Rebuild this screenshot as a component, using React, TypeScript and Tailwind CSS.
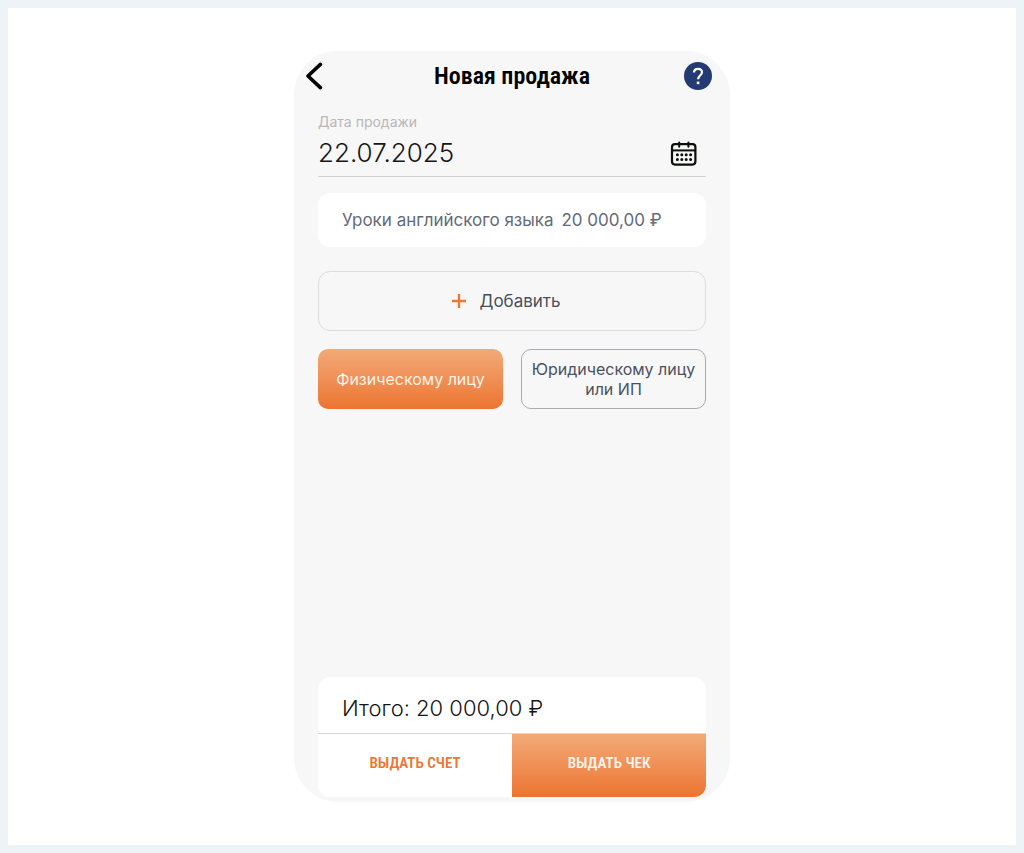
import React, { useState } from 'react';

type Customer = 'person' | 'company';

interface SaleItem {
  name: string;
  price: string;
}

const items: SaleItem[] = [{ name: 'Уроки английского языка', price: '20 000,00 ₽' }];

const BackIcon: React.FC = () => (
  <svg className="h-7 w-5" viewBox="0 0 20 28" fill="none" aria-hidden="true">
    <path d="M16.4 2.4 4 14l12.4 11.6" stroke="#000" strokeWidth="3.6" strokeLinecap="round" strokeLinejoin="round" />
  </svg>
);

const HelpIcon: React.FC = () => (
  <svg className="h-7 w-7" viewBox="0 0 28 28" fill="none" aria-hidden="true">
    <circle cx="14" cy="14" r="14" fill="#233a73" />
    <path
      d="M10 10.4c0-2.2 1.6-3.6 4-3.6s4 1.4 4 3.4c0 3.1-3.9 3.5-3.9 7"
      stroke="#fff"
      strokeWidth="2.2"
    />
    <path d="M12.8 19.6h2.6v2.6h-2.6z" fill="#fff" />
  </svg>
);

const CalendarIcon: React.FC = () => (
  <svg className="h-7 w-7" viewBox="0 0 28 28" fill="none" stroke="#0d0f0c" aria-hidden="true">
    <rect x="2" y="4.2" width="23.4" height="20.4" rx="3" strokeWidth="2.2" />
    <path d="M2 10.4h23.4" strokeWidth="2" />
    <path d="M9.2 2.4v4.4M18.4 2.4v4.4" strokeWidth="2" strokeLinecap="round" />
    <path
      d="M7.4 14.8h.01M11.8 14.8h.01M16.2 14.8h.01M20.6 14.8h.01M7.4 19.4h.01M11.8 19.4h.01M16.2 19.4h.01M20.6 19.4h.01"
      strokeWidth="3"
      strokeLinecap="round"
    />
  </svg>
);

const PlusIcon: React.FC = () => (
  <svg className="h-4 w-4" viewBox="0 0 16 16" fill="none" aria-hidden="true">
    <path d="M8 1v14M1 8h14" stroke="#ee7733" strokeWidth="2.4" />
  </svg>
);

const App: React.FC = () => {
  const [date, setDate] = useState('22.07.2025');
  const [customer, setCustomer] = useState<Customer>('person');

  const customerClass = (value: Customer) =>
    customer === value
      ? 'bg-linear-to-b from-[#f2aa77] to-[#ec742e] text-[#fff3ea]'
      : 'border border-[#a9abb0] text-[#4b5160]';

  return (
    <div className="flex min-h-screen flex-col items-center border-8 border-[#edf3f7] bg-white px-4 py-[43px] font-['Inter',sans-serif]">
      <main className="flex w-full max-w-[436px] flex-1 flex-col rounded-[44px] bg-[#f7f7f7] px-6 pb-[5px]">
        {/* Header */}
        <header className="-mx-4 flex h-[50px] items-center justify-between pr-[10px] pl-[2px]">
          <button type="button" aria-label="Назад" className="w-9">
            <BackIcon />
          </button>
          <h1 className="font-['Roboto_Condensed','Roboto',sans-serif] text-2xl font-semibold text-black">
            Новая продажа
          </h1>
          <button type="button" aria-label="Помощь">
            <HelpIcon />
          </button>
        </header>

        {/* Sale date */}
        <div className="mt-3 flex h-[64px] items-end justify-between border-b border-[#d2d2d2] pr-2">
          <div className="min-w-0 flex-1 pb-1.5">
            <label htmlFor="sale-date" className="block text-sm leading-4 text-[#b8b8b8]">
              Дата продажи
            </label>
            <input
              id="sale-date"
              value={date}
              onChange={(e) => setDate(e.target.value)}
              className="mt-1 block h-9 w-full bg-transparent text-[26px] font-light text-[#151515] outline-none"
            />
          </div>
          <button type="button" aria-label="Календарь" className="pb-2">
            <CalendarIcon />
          </button>
        </div>

        {/* Items */}
        <ul className="mt-4">
          {items.map((item) => (
            <li
              key={item.name}
              className="flex h-[54px] items-center gap-2 rounded-xl bg-white px-6 text-[17px] leading-6 text-[#656a77]"
            >
              <span>{item.name}</span>
              <span>{item.price}</span>
            </li>
          ))}
        </ul>

        <button
          type="button"
          className="mt-6 flex h-[60px] items-center justify-center gap-3 rounded-xl border border-[#dcdcdc] pr-3 text-[17px] leading-6 text-[#484e5b]"
        >
          <PlusIcon />
          Добавить
        </button>

        <div className="mt-[18px] grid grid-cols-2 gap-[18px]">
          <button
            type="button"
            onClick={() => setCustomer('person')}
            className={`h-[60px] rounded-[10px] text-base leading-5 ${customerClass('person')}`}
          >
            Физическому лицу
          </button>
          <button
            type="button"
            onClick={() => setCustomer('company')}
            className={`h-[60px] rounded-[10px] text-base leading-5 ${customerClass('company')}`}
          >
            Юридическому лицу
            <br />
            или ИП
          </button>
        </div>

        {/* Total and actions */}
        <section className="mt-auto overflow-hidden rounded-xl bg-white">
          <p className="flex h-[57px] items-center border-b border-[#d8d8d8] px-6 pt-[6px] text-[22px] font-light text-[#151515]">
            Итого: 20 000,00 ₽
          </p>
          <div className="grid h-[63px] grid-cols-2 font-['Roboto_Condensed','Roboto',sans-serif] text-[15px] font-semibold">
            <button type="button" className="pb-1 text-[#ed7632]">
              ВЫДАТЬ СЧЕТ
            </button>
            <button type="button" className="bg-linear-to-b from-[#f2aa77] to-[#ec742e] pb-1 text-[#fff3ea]">
              ВЫДАТЬ ЧЕК
            </button>
          </div>
        </section>
      </main>
    </div>
  );
};

export default App;
